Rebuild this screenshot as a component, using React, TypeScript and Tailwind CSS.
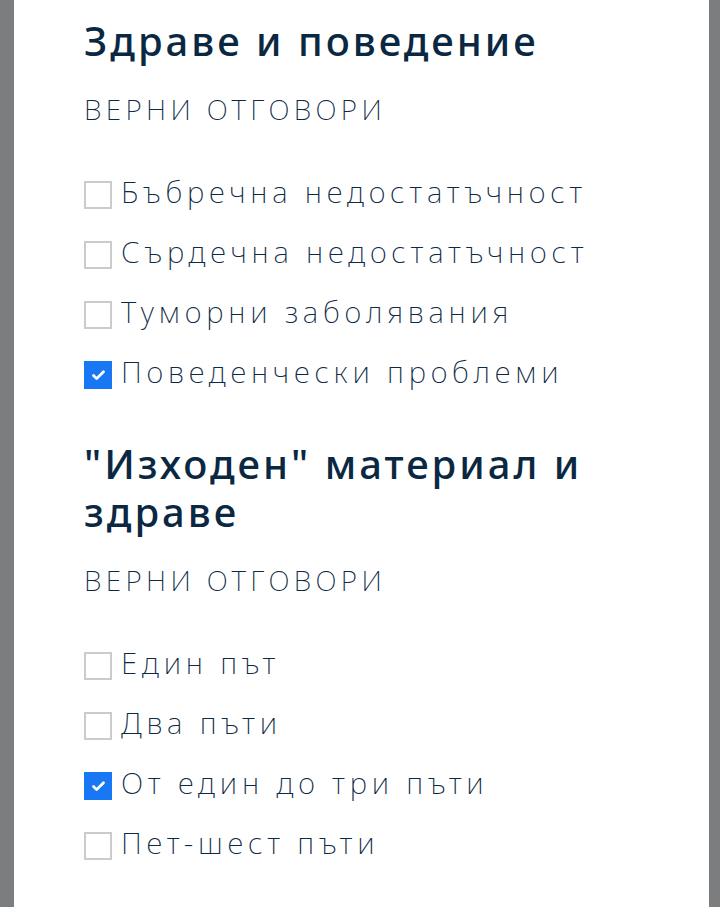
import { Check } from "lucide-react";

type Option = { label: string; checked?: boolean };

const sections: { title: string; options: Option[] }[] = [
  {
    title: "Здраве и поведение",
    options: [
      { label: "Бъбречна недостатъчност" },
      { label: "Сърдечна недостатъчност" },
      { label: "Туморни заболявания" },
      { label: "Поведенчески проблеми", checked: true },
    ],
  },
  {
    title: "\"Изходен\" материал и здраве",
    options: [
      { label: "Един път" },
      { label: "Два пъти" },
      { label: "От един до три пъти", checked: true },
      { label: "Пет-шест пъти" },
    ],
  },
];

function CheckRow({ label, checked }: Option) {
  return (
    <label className="flex items-center gap-[9px] h-[60px]">
      {checked ? (
        <span className="w-[28px] h-[28px] bg-[#1877f2] flex items-center justify-center shrink-0">
          <Check className="w-[15px] h-[15px] text-white" strokeWidth={4.5} />
        </span>
      ) : (
        <span className="w-[28px] h-[28px] border-2 border-[#cbcbcb] bg-white shrink-0" />
      )}
      {/* pb nudges the x-height centre onto the box centre */}
      <span className="text-[29.5px] font-extralight text-[#0d2a45] leading-none tracking-[4.8px] pb-[6px] whitespace-nowrap">
        {label}
      </span>
    </label>
  );
}

export default function App() {
  return (
    <div
      className="h-screen flex bg-[#7b7d7f] pl-[14px] pr-[11px] overflow-hidden"
      style={{ fontFamily: '"Noto Sans", "DejaVu Sans", sans-serif' }}
    >
      <div className="flex-1 bg-white pl-[70px] pr-[40px] pt-[17px]">
        {sections.map((s, i) => (
          <section key={i} className={i > 0 ? "mt-[35px]" : ""}>
            <h2 className="text-[40px] font-[470] leading-[48px] tracking-[3px] text-[#0b2842]">
              {s.title}
            </h2>
            <div className="mt-[26px] text-[28px] font-extralight uppercase text-[#0d2a45] leading-[36px] tracking-[4.4px]">
              Верни отговори
            </div>
            <div className="mt-[38px]">
              {s.options.map((o) => (
                <CheckRow key={o.label} {...o} />
              ))}
            </div>
          </section>
        ))}
      </div>
    </div>
  );
}
